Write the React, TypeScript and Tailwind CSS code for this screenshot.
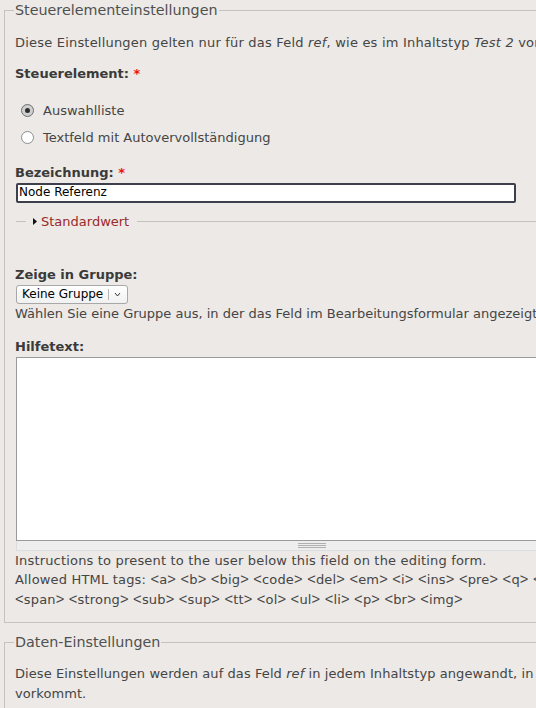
import React from 'react';

function Radio({ checked, label }: { checked?: boolean; label: string }) {
  return (
    <div className="flex items-center h-[19.5px]">
      {checked ? (
        <span className="ml-[6px] mr-[9px] flex h-[13px] w-[13px] items-center justify-center rounded-full border border-[#6f6f6f] bg-[#cfcfcf]">
          <span className="h-[5px] w-[5px] rounded-full bg-[#2e2e2e]" />
        </span>
      ) : (
        <span className="ml-[6px] mr-[9px] h-[13px] w-[13px] rounded-full border border-[#8e8e8e] bg-white" />
      )}
      <span>{label}</span>
    </div>
  );
}

function Required() {
  return <span className="text-[#ee1111]">*</span>;
}

// angle brackets are narrow in the original font
function Tags({ text }: { text: string }) {
  return (
    <>
      {text.split(/([<>])/).map((part, i) =>
        part === '<' || part === '>' ? (
          <span key={i} className="font-['Liberation_Sans',sans-serif] text-[14.7px]">
            {part}
          </span>
        ) : (
          <span key={i}>{part}</span>
        )
      )}
    </>
  );
}

export default function App() {
  return (
    <div className="w-[536px] h-[708px] overflow-hidden bg-[#ece9e6] font-['DejaVu_Sans',sans-serif] text-[13px] leading-[19.5px] text-[#454545]">
      <div className="w-[720px] pl-[4px]">
        {/* Widget settings */}
        <fieldset className="border border-[#c6c2be] px-[10px] pt-[12px] pb-[13px]">
          <legend className="-ml-px px-px text-[14.3px] leading-[21px] text-[#505050]">Steuerelementeinstellungen</legend>
          <p className="whitespace-nowrap tracking-[0.2px]">
            Diese Einstellungen gelten nur für das Feld <em>ref</em>, wie es im Inhaltstyp <em>Test 2</em> vorkommt.
          </p>

          <div className="mt-[11.5px] font-bold text-[#3a3a3a]">
            Steuerelement: <Required />
          </div>
          <div className="mt-[17.5px] flex flex-col gap-[7.5px]">
            <Radio checked label="Auswahlliste" />
            <Radio label="Textfeld mit Autovervollständigung" />
          </div>

          <div className="mt-[15.5px] font-bold text-[#3a3a3a]">
            Bezeichnung: <Required />
          </div>
          <div className="ml-px flex h-[20px] w-[500px] items-center rounded-[2px] border-2 border-[#3d404c] bg-white px-px text-[12px] text-black">
            Node Referenz
          </div>

          {/* collapsed fieldset */}
          <div className="mt-[9.7px] ml-px flex h-[19.5px] items-center">
            <div className="w-[10px] border-t border-[#c6c2be]" />
            <div className="flex items-center pl-[7px] pr-[8px]">
              <svg width="4" height="7" viewBox="0 0 4 7" className="mr-[4px]">
                <path d="M0 0 L4 3.5 L0 7 Z" fill="#111" />
              </svg>
              <span className="text-[#9a2a2a]">Standardwert</span>
            </div>
            <div className="flex-1 border-t border-[#c6c2be]" />
          </div>

          <div className="mt-[33.8px] font-bold text-[#3a3a3a]">Zeige in Gruppe:</div>
          <div className="mt-[0.5px] ml-px flex h-[19px] w-[112px] items-center rounded-[3px] border border-[#a8a8a8] bg-gradient-to-b from-white to-[#f1f1f1] text-[12px] text-black">
            <span className="pl-[5px]">Keine Gruppe</span>
            <span className="ml-auto h-[11px] border-l border-[#b5b5b5]" />
            <svg width="18" height="17" viewBox="0 0 18 17">
              <path d="M6 7 L8.5 10 L11 7" stroke="#333" strokeWidth="1" fill="none" />
            </svg>
          </div>
          <p className="whitespace-nowrap">
            Wählen Sie eine Gruppe aus, in der das Feld im Bearbeitungsformular angezeigt werden soll.
          </p>

          <div className="mt-[13px] font-bold text-[#3a3a3a]">Hilfetext:</div>
          <div className="mt-[0.5px] ml-px w-[592px]">
            <div className="h-[184px] border border-[#9a9a9a] bg-white" />
            <div className="flex h-[10px] items-center justify-center border-x border-b border-[#dddddd] bg-[#eeeeee]">
              <div className="flex flex-col gap-px">
                <div className="h-px w-[28px] bg-[#b0b0b0]" />
                <div className="h-px w-[28px] bg-[#b0b0b0]" />
                <div className="h-px w-[28px] bg-[#b0b0b0]" />
              </div>
            </div>
          </div>
          <div className="whitespace-nowrap tracking-[0.18px]">
            Instructions to present to the user below this field on the editing form.
            <br />
            <Tags text="Allowed HTML tags: <a> <b> <big> <code> <del> <em> <i> <ins> <pre> <q> <small>" />
            <br />
            <Tags text="<span> <strong> <sub> <sup> <tt> <ol> <ul> <li> <p> <br> <img>" />
          </div>
        </fieldset>

        {/* Data settings */}
        <fieldset className="mt-[8.5px] border border-[#c6c2be] px-[10px] pt-[11.5px] pb-[13px]">
          <legend className="-ml-px px-px text-[14.3px] leading-[21px] text-[#505050]">Daten-Einstellungen</legend>
          <p className="whitespace-nowrap tracking-[0.08px]">
            Diese Einstellungen werden auf das Feld <em>ref</em> in jedem Inhaltstyp angewandt, in dem es
            <br />
            vorkommt.
          </p>
        </fieldset>
      </div>
    </div>
  );
}
